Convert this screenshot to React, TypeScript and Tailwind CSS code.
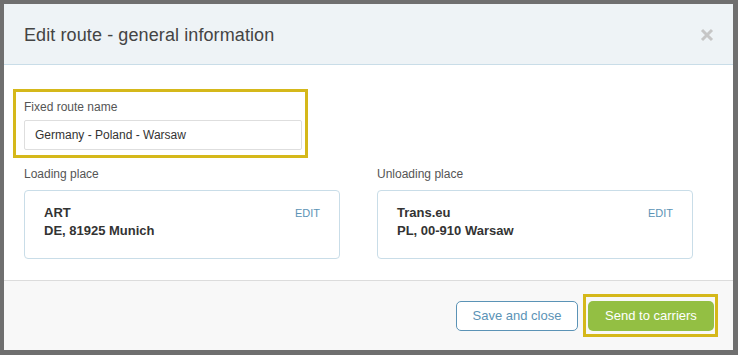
export default function App() {
  return (
    <div className="w-[738px] h-[355px] bg-[#6f6f6f] pt-[4px] pl-[4px] pr-[5px] pb-[5px] font-['Liberation_Sans',Arial,sans-serif]">
      <div className="w-[729px] h-[346px] bg-white flex flex-col">
        {/* header */}
        <div className="h-[61px] bg-[#eef3f6] border-b border-[#c9dde8] flex items-center justify-between pl-[20px] pr-[19px] pt-[1px] shrink-0">
          <h2 className="text-[18px] text-[#444] leading-none tracking-[0.1px]">Edit route - general information</h2>
          <svg width="14" height="14" viewBox="0 0 14 14">
            <path d="M2 2 L12 12 M12 2 L2 12" stroke="#c6c6c6" strokeWidth="3" />
          </svg>
        </div>

        {/* body */}
        <div className="flex-1 pl-[20px] pt-[24px]">
          <div className="w-[295px] ml-[-11px] border-[3px] border-[#d5b81a] pl-[8px] pr-[3px] pt-[7px] pb-[5px]">
            <label className="block text-[12px] leading-[16px] text-[#555] mb-[5px]">Fixed route name</label>
            <input
              readOnly
              value="Germany - Poland - Warsaw"
              className="w-[278px] h-[30px] border border-[#dedede] rounded-[2px] px-[10px] text-[12px] text-[#333] outline-none"
            />
          </div>

          <div className="flex gap-[37px] mt-[8px]">
            <Place label="Loading place" name="ART" address="DE, 81925 Munich" />
            <Place label="Unloading place" name="Trans.eu" address="PL, 00-910 Warsaw" />
          </div>
        </div>

        {/* footer */}
        <div className="h-[70px] shrink-0 bg-[#f8f8f8] border-t border-[#dcdcdc] flex items-center justify-end pr-[15px]">
          <button className="w-[122px] h-[30px] mr-[5px] bg-white border border-[#5b93b6] rounded-[5px] text-[13px] text-[#5b93b6]">
            Save and close
          </button>
          <div className="border-[3px] border-[#d5b81a] pl-[2px] pr-[1px] pt-[4px] pb-[3px]">
            <button className="w-[126px] h-[30px] bg-[#93bf43] rounded-[5px] text-[13px] text-white block">
              Send to carriers
            </button>
          </div>
        </div>
      </div>
    </div>
  );
}

function Place({ label, name, address }: { label: string; name: string; address: string }) {
  return (
    <div className="w-[316px]">
      <div className="text-[12px] leading-[16px] text-[#555] mb-[8px]">{label}</div>
      <div className="h-[69px] border border-[#c9dde8] rounded-[4px] pl-[19px] pr-[19px] pt-[13px] flex justify-between">
        <div className="text-[13px] leading-[18px] font-bold text-[#333]">
          <div>{name}</div>
          <div>{address}</div>
        </div>
        <span className="text-[11px] leading-[18px] text-[#5b93b6]">EDIT</span>
      </div>
    </div>
  );
}
